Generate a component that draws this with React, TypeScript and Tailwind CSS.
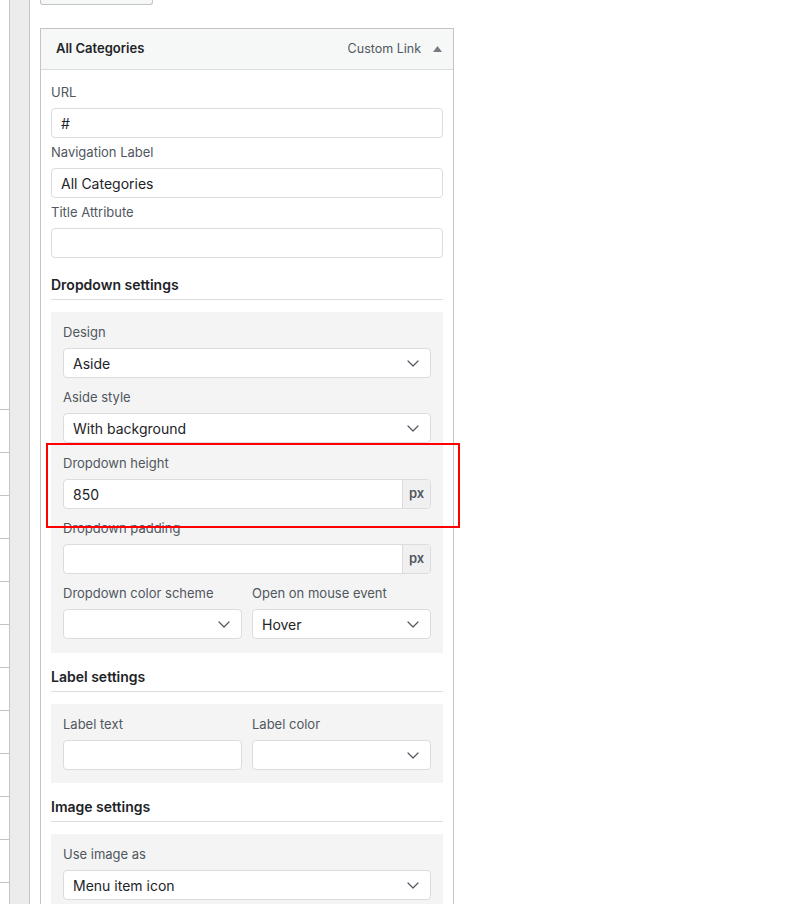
import React from "react";

const labelClass = "block h-[18px] text-[13px] leading-[18px] text-[#50575e]";
const inputClass =
  "flex h-[30px] w-full items-center rounded-[4px] border border-[#dcdcde] bg-white px-[9px] text-[14px] text-[#1d2327]";

function Chevron() {
  return (
    <svg width="12" height="7" viewBox="0 0 12 7" fill="none" className="shrink-0">
      <path d="M1 1l5 5 5-5" stroke="#50575e" strokeWidth="1.2" strokeLinecap="round" strokeLinejoin="round" />
    </svg>
  );
}

function TextInput({ value }: { value?: string }) {
  return <div className={inputClass}>{value}</div>;
}

function SelectBox({ value }: { value?: string }) {
  return (
    <div className={inputClass + " justify-between pr-[11px]"}>
      <span>{value}</span>
      <Chevron />
    </div>
  );
}

function PxInput({ value }: { value?: string }) {
  return (
    <div className="flex h-[30px] w-full overflow-hidden rounded-[4px] border border-[#dcdcde] bg-white text-[14px] text-[#1d2327]">
      <div className="flex flex-1 items-center px-[9px]">{value}</div>
      <div className="flex w-[28px] items-center justify-center border-l border-[#dcdcde] bg-[#f0f0f1] text-[13px] font-semibold text-[#50575e]">
        px
      </div>
    </div>
  );
}

function Field({ label, children, className = "" }: { label: string; children: React.ReactNode; className?: string }) {
  return (
    <div className={className}>
      <span className={labelClass}>{label}</span>
      <div className="mt-[7px]">{children}</div>
    </div>
  );
}

function SectionTitle({ children, className = "" }: { children: React.ReactNode; className?: string }) {
  return (
    <div className={"border-b border-[#dcdcde] pb-[5px] " + className}>
      <h3 className="h-[18px] text-[14px] font-semibold leading-[18px] text-[#1d2327]">{children}</h3>
    </div>
  );
}

export default function App() {
  return (
    <div className="flex h-[904px] w-[785px] overflow-hidden bg-white font-['Inter',sans-serif]">
      {/* left edge list */}
      <div className="flex w-[9px] shrink-0 flex-col">
        <div className="h-[409px] shrink-0" />
        {Array.from({ length: 12 }).map((_, i) => (
          <div key={i} className="h-[43px] shrink-0 border-t border-[#c3c4c7]" />
        ))}
      </div>
      <div className="w-[21px] shrink-0 border-x border-[#c3c4c7] bg-[#ececed]" />
      <div className="w-[10px] shrink-0" />

      <div className="relative flex w-[414px] shrink-0 flex-col">
        <div className="h-[5px] w-[113px] shrink-0 rounded-b-[3px] border-x border-b border-[#c3c4c7] bg-[#f6f7f7]" />
        <div className="mt-[23px] flex flex-1 shrink-0 flex-col border border-[#c3c4c7]">
          <div className="flex h-[41px] shrink-0 items-center justify-between border-b border-[#dcdcde] bg-[#f6f7f7] pl-[15px] pr-[11px]">
            <span className="text-[13px] font-semibold text-[#1d2327]">All Categories</span>
            <div className="flex items-center gap-[12px]">
              <span className="text-[12.5px] text-[#50575e]">Custom Link</span>
              <svg width="9" height="6" viewBox="0 0 9 6">
                <path d="M0 6L4.5 0 9 6z" fill="#787c82" />
              </svg>
            </div>
          </div>

          <div className="px-[10px] pt-[13px]">
            <Field label="URL">
              <TextInput value="#" />
            </Field>
            <Field label="Navigation Label" className="mt-[5px]">
              <TextInput value="All Categories" />
            </Field>
            <Field label="Title Attribute" className="mt-[5px]">
              <TextInput />
            </Field>

            <SectionTitle className="mt-[18px]">Dropdown settings</SectionTitle>
            <div className="mt-[12px] bg-[#f4f4f4] px-[12px] pb-[14px] pt-[11px]">
              <Field label="Design">
                <SelectBox value="Aside" />
              </Field>
              <Field label="Aside style" className="mt-[10px]">
                <SelectBox value="With background" />
              </Field>
              <Field label="Dropdown height" className="mt-[11px]">
                <PxInput value="850" />
              </Field>
              <Field label="Dropdown padding" className="mt-[10px]">
                <PxInput />
              </Field>
              <div className="mt-[10px] grid grid-cols-2 gap-[10px]">
                <Field label="Dropdown color scheme">
                  <SelectBox />
                </Field>
                <Field label="Open on mouse event">
                  <SelectBox value="Hover" />
                </Field>
              </div>
            </div>

            <SectionTitle className="mt-[15px]">Label settings</SectionTitle>
            <div className="mt-[12px] grid grid-cols-2 gap-[10px] bg-[#f4f4f4] px-[12px] pb-[13px] pt-[11px]">
              <Field label="Label text">
                <TextInput />
              </Field>
              <Field label="Label color">
                <SelectBox />
              </Field>
            </div>

            <SectionTitle className="mt-[15px]">Image settings</SectionTitle>
            <div className="mt-[12px] bg-[#f4f4f4] px-[12px] pb-[14px] pt-[11px]">
              <Field label="Use image as">
                <SelectBox value="Menu item icon" />
              </Field>
            </div>
          </div>
        </div>

        {/* highlight annotation */}
        <div className="pointer-events-none absolute left-[6px] top-[443px] h-[85px] w-[414px] border-2 border-[#ff0000]" />
      </div>
    </div>
  );
}
